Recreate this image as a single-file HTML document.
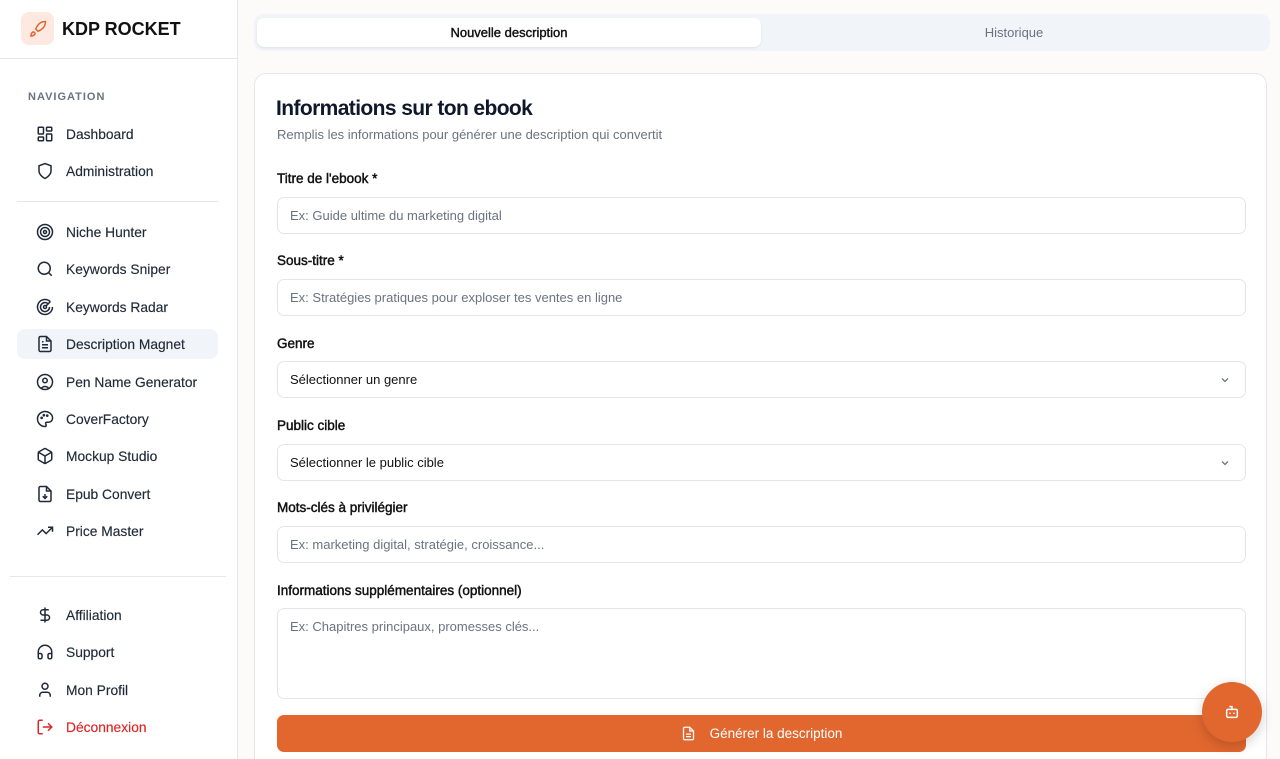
<!DOCTYPE html>
<html><head><meta charset="utf-8"><style>
*{box-sizing:border-box;margin:0;padding:0}
html,body{width:1280px;height:759px;overflow:hidden}
body{font-family:"Liberation Sans",sans-serif;background:#fdfbfa;color:#0f172a;position:relative}
.side{position:absolute;left:0;top:0;width:238px;height:759px;background:#fff;border-right:1px solid #e5e7eb}
.logo{position:absolute;left:21px;top:12px;width:33px;height:33px;border-radius:8px;background:#fde9df;display:flex;align-items:center;justify-content:center}
.brand{position:absolute;left:62px;top:19px;font-size:18px;font-weight:700;color:#111}
.hline{position:absolute;height:1px;background:#e5e7eb}
.navh{position:absolute;left:28px;top:91px;font-size:11px;letter-spacing:1px;color:#6b7280;font-weight:600}
.item{position:absolute;left:17px;width:201px;height:30px;border-radius:8px;display:flex;align-items:center;font-size:13.8px;color:#1f2937;-webkit-text-stroke:.15px #1f2937}
.item svg{position:absolute;left:19px;top:6px}
.item span{position:absolute;left:49px}
.item.act{background:#f1f4f8}
.tabs{position:absolute;left:254px;top:14px;width:1016px;height:37px;background:#f1f4f8;border-radius:9px}
.tab{position:absolute;top:4px;height:29px;display:flex;align-items:center;justify-content:center;font-size:13px;border-radius:7px}
.card{position:absolute;left:254px;top:73px;width:1013px;height:720px;background:#fff;border:1px solid #e5e7eb;border-radius:12px}
h1{position:absolute;left:276px;top:97px;font-size:21px;font-weight:700;letter-spacing:-.6px}
.sub{position:absolute;left:277px;top:127px;font-size:13px;color:#6b7280}
.lbl{position:absolute;left:277px;font-size:13.5px;color:#111;-webkit-text-stroke:.45px #111}
.inp{position:absolute;left:277px;width:969px;height:37px;border:1px solid #e2e5ea;border-radius:7px;font-size:13px;color:#6b7280;padding-left:12px;display:flex;align-items:center}
.inp.sel{color:#111}
.chev{position:absolute;right:14px;top:12px}
.btn{position:absolute;left:277px;top:715px;width:969px;height:37px;background:#e2672f;border-radius:7px;color:#fff;font-size:13.5px;display:flex;align-items:center;justify-content:center;gap:14px}
.fab{position:absolute;left:1202px;top:682px;width:60px;height:60px;border-radius:50%;background:#e2672f;box-shadow:0 4px 12px rgba(0,0,0,.18);display:flex;align-items:center;justify-content:center}
</style></head><body>
<div class="side">
<div class="logo"><svg width="18" height="18" viewBox="0 0 24 24" fill="none" stroke="#e2672f" stroke-width="2" stroke-linecap="round" stroke-linejoin="round"><path d="M4.5 16.5c-1.5 1.3-2 5-2 5s3.7-.5 5-2c.7-.8.7-2.1-.1-2.9a2.2 2.2 0 0 0-2.9-.1z"/><path d="M12 15l-3-3a22 22 0 0 1 2-3.95A12.9 12.9 0 0 1 22 2c0 2.7-.8 7.5-6 11a22 22 0 0 1-4 2z"/></svg></div>
<div class="brand">KDP ROCKET</div>
<div class="hline" style="left:0;top:58px;width:237px"></div>
<div class="navh">NAVIGATION</div>
<div class="item" style="top:119px"><svg width="18" height="18" viewBox="0 0 24 24" fill="none" stroke="#1f2937" stroke-width="2"><rect x="3" y="3" width="7" height="9" rx="1"/><rect x="14" y="3" width="7" height="5" rx="1"/><rect x="14" y="12" width="7" height="9" rx="1"/><rect x="3" y="16" width="7" height="5" rx="1"/></svg><span>Dashboard</span></div>
<div class="item" style="top:156px"><svg width="18" height="18" viewBox="0 0 24 24" fill="none" stroke="#1f2937" stroke-width="2"><path d="M12 22s8-4 8-10V5l-8-3-8 3v7c0 6 8 10 8 10z"/></svg><span>Administration</span></div>
<div class="hline" style="left:17px;top:201px;width:201px"></div>
<div class="item" style="top:217px"><svg width="18" height="18" viewBox="0 0 24 24" fill="none" stroke="#1f2937" stroke-width="2"><circle cx="12" cy="12" r="10"/><circle cx="12" cy="12" r="6"/><circle cx="12" cy="12" r="2"/></svg><span>Niche Hunter</span></div>
<div class="item" style="top:254px"><svg width="18" height="18" viewBox="0 0 24 24" fill="none" stroke="#1f2937" stroke-width="2"><circle cx="11" cy="11" r="8"/><path d="M21 21l-4.3-4.3"/></svg><span>Keywords Sniper</span></div>
<div class="item" style="top:292px"><svg width="18" height="18" viewBox="0 0 24 24" fill="none" stroke="#1f2937" stroke-width="2"><path d="M19.1 4.9A10 10 0 1 0 22 12"/><path d="M16.2 7.8A6 6 0 1 0 18 12"/><circle cx="12" cy="12" r="2"/><path d="M13.4 10.6L19 5"/></svg><span>Keywords Radar</span></div>
<div class="item act" style="top:329px"><svg width="18" height="18" viewBox="0 0 24 24" fill="none" stroke="#1f2937" stroke-width="2"><path d="M14 2H6a2 2 0 0 0-2 2v16a2 2 0 0 0 2 2h12a2 2 0 0 0 2-2V8z"/><path d="M14 2v6h6M16 13H8M16 17H8M10 9H8"/></svg><span>Description Magnet</span></div>
<div class="item" style="top:367px"><svg width="18" height="18" viewBox="0 0 24 24" fill="none" stroke="#1f2937" stroke-width="2"><circle cx="12" cy="12" r="10"/><circle cx="12" cy="10" r="3"/><path d="M7 20.7a6 6 0 0 1 10 0"/></svg><span>Pen Name Generator</span></div>
<div class="item" style="top:404px"><svg width="18" height="18" viewBox="0 0 24 24" fill="none" stroke="#1f2937" stroke-width="2"><path d="M12 2C6.5 2 2 6.5 2 12s4.5 10 10 10c.9 0 1.6-.7 1.6-1.7 0-.4-.2-.8-.4-1.1-.3-.3-.4-.7-.4-1.1 0-.9.7-1.7 1.7-1.7h2c3.1 0 5.6-2.5 5.6-5.6C22 6 17.5 2 12 2z"/><circle cx="7.5" cy="10.5" r=".8"/><circle cx="10.5" cy="7" r=".8"/><circle cx="15" cy="7.5" r=".8"/></svg><span>CoverFactory</span></div>
<div class="item" style="top:441px"><svg width="18" height="18" viewBox="0 0 24 24" fill="none" stroke="#1f2937" stroke-width="2"><path d="M21 8a2 2 0 0 0-1-1.7l-7-4a2 2 0 0 0-2 0l-7 4A2 2 0 0 0 3 8v8a2 2 0 0 0 1 1.7l7 4a2 2 0 0 0 2 0l7-4a2 2 0 0 0 1-1.7z"/><path d="M3.3 7L12 12l8.7-5M12 22V12"/></svg><span>Mockup Studio</span></div>
<div class="item" style="top:479px"><svg width="18" height="18" viewBox="0 0 24 24" fill="none" stroke="#1f2937" stroke-width="2"><path d="M14 2H6a2 2 0 0 0-2 2v16a2 2 0 0 0 2 2h12a2 2 0 0 0 2-2V8z"/><path d="M14 2v6h6M12 12v6M9 15l3 3 3-3"/></svg><span>Epub Convert</span></div>
<div class="item" style="top:516px"><svg width="18" height="18" viewBox="0 0 24 24" fill="none" stroke="#1f2937" stroke-width="2"><path d="M22 7l-8.5 8.5-5-5L2 17"/><path d="M16 7h6v6"/></svg><span>Price Master</span></div>
<div class="hline" style="left:10px;top:576px;width:216px"></div>
<div class="item" style="top:600px"><svg width="18" height="18" viewBox="0 0 24 24" fill="none" stroke="#1f2937" stroke-width="2"><path d="M12 2v20M17 5H9.5a3.5 3.5 0 0 0 0 7h5a3.5 3.5 0 0 1 0 7H6"/></svg><span>Affiliation</span></div>
<div class="item" style="top:637px"><svg width="18" height="18" viewBox="0 0 24 24" fill="none" stroke="#1f2937" stroke-width="2"><path d="M3 14h3a2 2 0 0 1 2 2v3a2 2 0 0 1-2 2H5a2 2 0 0 1-2-2v-7a9 9 0 0 1 18 0v7a2 2 0 0 1-2 2h-1a2 2 0 0 1-2-2v-3a2 2 0 0 1 2-2h3"/></svg><span>Support</span></div>
<div class="item" style="top:675px"><svg width="18" height="18" viewBox="0 0 24 24" fill="none" stroke="#1f2937" stroke-width="2"><circle cx="12" cy="7" r="4"/><path d="M19 21v-2a4 4 0 0 0-4-4H9a4 4 0 0 0-4 4v2"/></svg><span>Mon Profil</span></div>
<div class="item" style="top:712px;color:#dc2626;-webkit-text-stroke:.15px #dc2626"><svg width="18" height="18" viewBox="0 0 24 24" fill="none" stroke="#dc2626" stroke-width="2"><path d="M9 21H5a2 2 0 0 1-2-2V5a2 2 0 0 1 2-2h4M16 17l5-5-5-5M21 12H9"/></svg><span>Déconnexion</span></div>
</div>
<div class="tabs"><div class="tab" style="left:3px;width:504px;background:#fff;box-shadow:0 1px 2px rgba(0,0,0,.08);color:#111;-webkit-text-stroke:.4px #111">Nouvelle description</div><div class="tab" style="left:510px;width:500px;color:#6b7280">Historique</div></div>
<div class="card"></div>
<h1>Informations sur ton ebook</h1>
<div class="sub">Remplis les informations pour générer une description qui convertit</div>
<div class="lbl" style="top:171px">Titre de l'ebook *</div>
<div class="inp" style="top:197px">Ex: Guide ultime du marketing digital</div>
<div class="lbl" style="top:253px">Sous-titre *</div>
<div class="inp" style="top:279px">Ex: Stratégies pratiques pour exploser tes ventes en ligne</div>
<div class="lbl" style="top:336px">Genre</div>
<div class="inp sel" style="top:361px">Sélectionner un genre<svg class="chev" width="12" height="12" viewBox="0 0 24 24" fill="none" stroke="#6b7280" stroke-width="2.5"><path d="M6 9l6 6 6-6"/></svg></div>
<div class="lbl" style="top:418px">Public cible</div>
<div class="inp sel" style="top:444px">Sélectionner le public cible<svg class="chev" width="12" height="12" viewBox="0 0 24 24" fill="none" stroke="#6b7280" stroke-width="2.5"><path d="M6 9l6 6 6-6"/></svg></div>
<div class="lbl" style="top:500px">Mots-clés à privilégier</div>
<div class="inp" style="top:526px">Ex: marketing digital, stratégie, croissance...</div>
<div class="lbl" style="top:583px">Informations supplémentaires (optionnel)</div>
<div class="inp" style="top:608px;height:91px;align-items:flex-start;padding-top:10px">Ex: Chapitres principaux, promesses clés...</div>
<div class="btn"><svg width="15" height="15" viewBox="0 0 24 24" fill="none" stroke="#fff" stroke-width="2"><path d="M14 2H6a2 2 0 0 0-2 2v16a2 2 0 0 0 2 2h12a2 2 0 0 0 2-2V8z"/><path d="M14 2v6h6M16 13H8M16 17H8"/></svg>Générer la description</div>
<div class="fab"><svg width="16" height="16" viewBox="0 0 24 24" fill="none" stroke="#fff" stroke-width="2.2"><path d="M12 8V4H8"/><rect x="4" y="8" width="16" height="12" rx="2"/><path d="M9 13v2M15 13v2"/></svg></div>
</body></html>
